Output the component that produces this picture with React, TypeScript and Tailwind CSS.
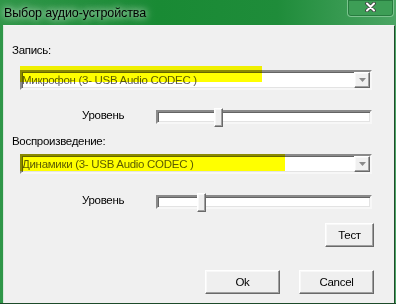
import React from 'react'

// ─── Classic Win7 bevels ──────────────────────────────────────────────────────
const sunken =
  'border-2 border-t-[#8a8a8a] border-l-[#8a8a8a] border-r-[#f7f7f7] border-b-[#f7f7f7] shadow-[inset_1px_1px_#646464,inset_-1px_-1px_#e3e3e3]'
const raised =
  'border border-t-white border-l-white border-r-[#696969] border-b-[#696969] shadow-[inset_-1px_-1px_#a0a0a0,inset_1px_1px_#f8f8f8]'
const txt = 'text-[11.5px] leading-[15px] tracking-[-0.3px]'

function Combo({ text, hl }: { text: string; hl: string }) {
  return (
    <div className="relative ml-[16px] w-[352px]">
      <div className={`flex h-[20px] w-[352px] items-center bg-white ${sunken}`}>
        <span className={`flex-1 truncate pt-[1px] text-[#5c5c5c] ${txt}`}>{text}</span>
        <div className={`flex h-[16px] w-[16px] items-center justify-center bg-[#f0f0f0] ${raised}`}>
          <svg width="7" height="4" viewBox="0 0 7 4">
            <path d="M0 0h7L3.5 4z" fill="#8a8a8a" />
          </svg>
        </div>
      </div>
      {/* marker highlight painted over the screenshot */}
      <div className={`pointer-events-none absolute left-0 bg-[#ffff00] mix-blend-multiply ${hl}`} />
    </div>
  )
}

function Level({ thumb }: { thumb: string }) {
  return (
    <div className="flex items-center">
      <span className={`ml-[78px] mt-[-4px] w-[74px] text-black ${txt}`}>Уровень</span>
      <div className={`relative h-[14px] w-[216px] bg-white ${sunken}`}>
        <div className={`absolute top-[-4px] h-[19px] w-[9px] bg-[#eeeeee] ${raised} ${thumb}`} />
      </div>
    </div>
  )
}

function Btn({ label, w }: { label: string; w: string }) {
  return (
    <button className={`flex h-[24px] items-center justify-center bg-[#efefef] text-black ${txt} ${raised} ${w}`}>
      {label}
    </button>
  )
}

export default function App() {
  return (
    <div className="flex h-[304px] w-[396px] flex-col border-b border-b-[#1d4a2a] bg-[linear-gradient(90deg,#2f9648_0%,#198a34_40%,#1f8c3a_70%,#4ba564_100%)] font-['Liberation_Sans',Arial,sans-serif]">
      {/* ── Title bar ── */}
      <div className="flex h-[25px] items-start justify-between">
        <span className="ml-[4px] mt-[5px] text-[12.5px] leading-[16px] tracking-[-0.1px] text-black [text-shadow:0_0_6px_rgba(255,255,255,0.9),0_0_12px_rgba(255,255,255,0.6)]">
          Выбор аудио-устройства
        </span>
        <div className="mr-[2px] flex h-[17px] w-[47px] items-center justify-center rounded-b-[4px] border border-t-0 border-[#7cc48f] bg-[#3d9e56] shadow-[inset_0_0_0_1px_rgba(0,60,20,0.35)]">
          <svg width="11" height="10" viewBox="0 0 11 10" className="mt-[-3px]">
            <path d="M2 1.5l7 7M9 1.5l-7 7" stroke="#3b3b3b" strokeWidth="3.6" strokeLinecap="round" />
            <path d="M2 1.5l7 7M9 1.5l-7 7" stroke="#ffffff" strokeWidth="2" strokeLinecap="round" />
          </svg>
        </div>
      </div>

      {/* ── Dialog body ── */}
      <div className="ml-[3px] mr-[1px] flex flex-1 flex-col border-l border-r border-t border-l-[#d8e8dc] border-r-[#1f4a2b] border-t-[#f4f4f4] bg-[#f0f0f0]">
        <span className={`ml-[8px] mt-[17px] text-black ${txt}`}>Запись:</span>
        <div className="mt-[12px]">
          <Combo text="Микрофон (3- USB Audio CODEC )" hl="top-[-4px] h-[16px] w-[242px]" />
        </div>
        <div className="mt-[20px]">
          <Level thumb="left-[56px]" />
        </div>

        <span className={`ml-[8px] mt-[10px] text-black ${txt}`}>Воспроизведение:</span>
        <div className="mt-[5px]">
          <Combo text="Динамики (3- USB Audio CODEC )" hl="top-0 h-[17px] w-[265px]" />
        </div>
        <div className="mt-[21px]">
          <Level thumb="left-[39px]" />
        </div>

        <div className="mt-[14px] flex justify-end pr-[20px]">
          <Btn label="Тест" w="w-[49px]" />
        </div>
        <div className="mt-[23px] flex justify-end gap-[19px] pr-[20px]">
          <Btn label="Ok" w="w-[75px]" />
          <Btn label="Cancel" w="w-[75px]" />
        </div>
      </div>
    </div>
  )
}
